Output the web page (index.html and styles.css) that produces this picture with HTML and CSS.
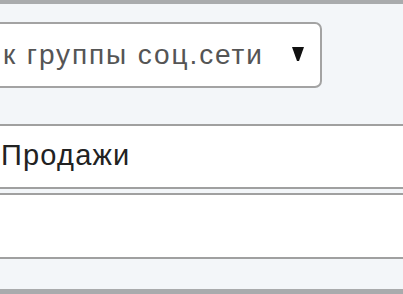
FILE: index.html
```html
<!DOCTYPE html>
<html lang="ru">
<head>
<meta charset="utf-8">
<title>Форма</title>
<link rel="stylesheet" href="styles.css">
</head>
<body>
<div class="page">
  <div class="topbar"></div>
  <div class="content">
    <div class="select">
      <span class="select-text">к группы соц.сети</span>
      <svg class="arrow" width="12" height="15" viewBox="0 0 12 15"><polygon points="0,1 12,1 7,15 5,15" fill="#111"/></svg>
    </div>
    <div class="fields">
      <div class="field">Продажи</div>
      <div class="field field-empty"></div>
    </div>
  </div>
  <div class="bottombar"></div>
</div>
</body>
</html>
```
FILE: styles.css
```css
html, body {
  margin: 0;
  padding: 0;
}
body {
  background: #f3f6f9;
  font-family: "Liberation Sans", Arial, sans-serif;
  overflow: hidden;
}
.page {
  height: 294px;
  display: flex;
  flex-direction: column;
}
.topbar {
  height: 4px;
  background: #a9abad;
  flex: none;
}
.content {
  flex: 1;
  padding-top: 18px;
}
.select {
  margin-left: -20px;
  height: 62px;
  border: 2px solid #a3a3a3;
  border-radius: 0 7px 7px 0;
  background: #fff;
  display: flex;
  align-items: center;
  justify-content: space-between;
  padding-left: 21px;
  padding-right: 16px;
  box-sizing: content-box;
  width: 301px;
}
.select-text {
  font-size: 28px;
  letter-spacing: 1.9px;
  line-height: 62px;
  color: #555;
  white-space: nowrap;
}
.arrow {
  margin-top: -3px;
  flex: none;
}
.fields {
  margin-top: 36px;
  display: flex;
  flex-direction: column;
  gap: 4px;
}
.field {
  margin: 0 -10px;
  height: 61px;
  border-top: 2px solid #a0a0a0;
  border-bottom: 2px solid #a0a0a0;
  background: #fff;
  padding-left: 11px;
  font-size: 29px;
  letter-spacing: 1.2px;
  line-height: 58px;
  color: #222;
}
.field-empty {
  height: 62px;
}
.bottombar {
  height: 5px;
  background: #a9abad;
  flex: none;
}
```
